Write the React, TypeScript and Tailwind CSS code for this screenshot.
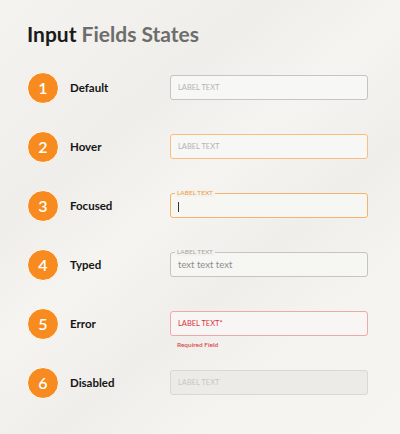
const rows = [
  { n: 1, label: "Default", kind: "default" },
  { n: 2, label: "Hover", kind: "hover" },
  { n: 3, label: "Focused", kind: "focused" },
  { n: 4, label: "Typed", kind: "typed" },
  { n: 5, label: "Error", kind: "error" },
  { n: 6, label: "Disabled", kind: "disabled" },
];

const Field = ({ kind }: { kind: string }) => {
  if (kind === "focused" || kind === "typed") {
    const focused = kind === "focused";
    return (
      <div
        className={`relative h-[25px] w-[198px] rounded-[3px] border bg-[#f6f6f3] flex items-center px-[7px] ${
          focused ? "border-[#f7b26b]" : "border-[#c4c4c2]"
        }`}
      >
        <span
          className={`absolute -top-[5px] left-[4px] px-[2px] bg-[#f3f2ee] text-[6.5px] leading-[8px] ${
            focused ? "text-[#f29a3f]" : "text-[#a6a6a4]"
          }`}
        >
          LABEL TEXT
        </span>
        {focused ? (
          <span className="mt-[3px] w-[1px] h-[10px] bg-[#333]" />
        ) : (
          <span className="mt-[2px] text-[9.5px] text-[#8e8e8c]">text text text</span>
        )}
      </div>
    );
  }
  const box: Record<string, string> = {
    default: "border-[#c4c4c2] bg-[#f7f7f5] text-[#b4b4b2]",
    hover: "border-[#f9bd80] bg-[#f7f7f5] text-[#b4b4b2]",
    error: "border-[#eeaaaa] bg-[#f8f6f4] text-[#d8353c]",
    disabled: "border-[#d8d8d5] bg-[#ecebe8] text-[#c8c8c5]",
  };
  return (
    <div className="relative">
      <div className={`h-[25px] w-[198px] rounded-[3px] border flex items-center px-[7px] text-[7.5px] ${box[kind]}`}>
        {kind === "error" ? "LABEL TEXT*" : "LABEL TEXT"}
      </div>
      {kind === "error" && (
        <span className="absolute top-[29px] left-[7px] text-[6.5px] font-semibold text-[#d8474d]">Required Field</span>
      )}
    </div>
  );
}

export default function App() {
  return (
    <div
      className="w-[400px] h-[434px] overflow-hidden bg-[#f3f2ee] bg-[linear-gradient(140deg,#f4f3ef_0%,#efeeea_30%,#f5f4f0_45%,#efeeea_62%,#f4f3ef_75%,#f6f5f1_100%)] px-[27px] pt-[20px]"
      style={{ fontFamily: "Lato, 'Noto Sans', sans-serif" }}
    >
      <h1 className="text-[21px] leading-[28px] font-bold text-[#1a1a1a]">
        Input <span className="text-[#6d6d6b]">Fields States</span>
      </h1>
      <div className="mt-[10px] flex flex-col">
        {rows.map((r) => (
          <div key={r.n} className="flex items-center h-[59px]">
            <div className="w-[32px] h-[32px] rounded-full bg-[#f78b1f] border border-white flex items-center justify-center text-white text-[16px] font-semibold">
              {r.n}
            </div>
            <div className="ml-[11px] w-[100px] text-[11.5px] font-bold text-[#151515]">{r.label}</div>
            <Field kind={r.kind} />
          </div>
        ))}
      </div>
    </div>
  );
}
